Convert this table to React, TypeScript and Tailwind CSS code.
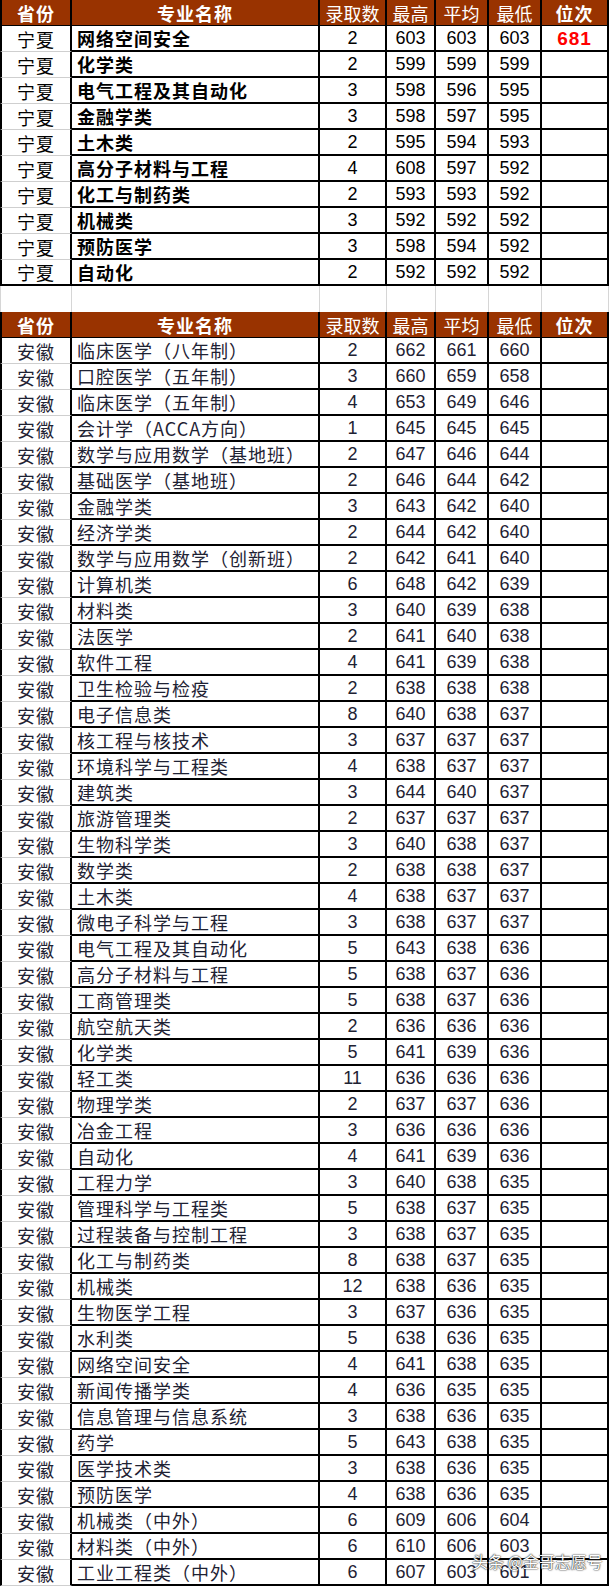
import React from "react";

type Row = [string, number, number, number, number, string?];

const ningxia: Row[] = [
  ["网络空间安全", 2, 603, 603, 603, "681"],
  ["化学类", 2, 599, 599, 599],
  ["电气工程及其自动化", 3, 598, 596, 595],
  ["金融学类", 3, 598, 597, 595],
  ["土木类", 2, 595, 594, 593],
  ["高分子材料与工程", 4, 608, 597, 592],
  ["化工与制药类", 2, 593, 593, 592],
  ["机械类", 3, 592, 592, 592],
  ["预防医学", 3, 598, 594, 592],
  ["自动化", 2, 592, 592, 592],
];

const anhui: Row[] = [
  ["临床医学（八年制）", 2, 662, 661, 660],
  ["口腔医学（五年制）", 3, 660, 659, 658],
  ["临床医学（五年制）", 4, 653, 649, 646],
  ["会计学（ACCA方向）", 1, 645, 645, 645],
  ["数学与应用数学（基地班）", 2, 647, 646, 644],
  ["基础医学（基地班）", 2, 646, 644, 642],
  ["金融学类", 3, 643, 642, 640],
  ["经济学类", 2, 644, 642, 640],
  ["数学与应用数学（创新班）", 2, 642, 641, 640],
  ["计算机类", 6, 648, 642, 639],
  ["材料类", 3, 640, 639, 638],
  ["法医学", 2, 641, 640, 638],
  ["软件工程", 4, 641, 639, 638],
  ["卫生检验与检疫", 2, 638, 638, 638],
  ["电子信息类", 8, 640, 638, 637],
  ["核工程与核技术", 3, 637, 637, 637],
  ["环境科学与工程类", 4, 638, 637, 637],
  ["建筑类", 3, 644, 640, 637],
  ["旅游管理类", 2, 637, 637, 637],
  ["生物科学类", 3, 640, 638, 637],
  ["数学类", 2, 638, 638, 637],
  ["土木类", 4, 638, 637, 637],
  ["微电子科学与工程", 3, 638, 637, 637],
  ["电气工程及其自动化", 5, 643, 638, 636],
  ["高分子材料与工程", 5, 638, 637, 636],
  ["工商管理类", 5, 638, 637, 636],
  ["航空航天类", 2, 636, 636, 636],
  ["化学类", 5, 641, 639, 636],
  ["轻工类", 11, 636, 636, 636],
  ["物理学类", 2, 637, 637, 636],
  ["冶金工程", 3, 636, 636, 636],
  ["自动化", 4, 641, 639, 636],
  ["工程力学", 3, 640, 638, 635],
  ["管理科学与工程类", 5, 638, 637, 635],
  ["过程装备与控制工程", 3, 638, 637, 635],
  ["化工与制药类", 8, 638, 637, 635],
  ["机械类", 12, 638, 636, 635],
  ["生物医学工程", 3, 637, 636, 635],
  ["水利类", 5, 638, 636, 635],
  ["网络空间安全", 4, 641, 638, 635],
  ["新闻传播学类", 4, 636, 635, 635],
  ["信息管理与信息系统", 3, 638, 636, 635],
  ["药学", 5, 643, 638, 635],
  ["医学技术类", 3, 638, 636, 635],
  ["预防医学", 4, 638, 636, 635],
  ["机械类（中外）", 6, 609, 606, 604],
  ["材料类（中外）", 6, 610, 606, 603],
  ["工业工程类（中外）", 6, 607, 603, 601],
];

const grid = "grid h-[26px] grid-cols-[72px_248px_67px_49px_53px_53px_67px]";
const cjk = "font-['Noto_Sans_CJK_SC',sans-serif]";
const num = "font-['Liberation_Sans','Noto_Sans_CJK_SC',sans-serif]";

function Header() {
  const cell = "flex items-center justify-center border-r-2 border-b border-black text-[18px] leading-none text-white";
  return (
    <div className={`${grid} bg-[#993300] ${cjk}`}>
      <div className={`${cell} border-l-2 font-bold tracking-[1px]`}>省份</div>
      <div className={`${cell} font-bold tracking-[1px]`}>专业名称</div>
      <div className={cell}>录取数</div>
      <div className={cell}>最高</div>
      <div className={cell}>平均</div>
      <div className={cell}>最低</div>
      <div className={`${cell} font-bold tracking-[1px]`}>位次</div>
    </div>
  );
}

function DataRow({ prov, row, bold, last, ink }: { prov: string; row: Row; bold: boolean; last: boolean; ink: string }) {
  const [name, count, hi, avg, lo, rank] = row;
  const line = "border-r-2 border-b-2 border-black";
  const numCell = `${line} flex items-center justify-center text-[18px] leading-none ${num} ${ink}`;
  return (
    <div className={`${grid} bg-white`}>
      <div
        className={`flex items-center justify-center border-l-2 border-r-2 border-l-black border-r-black text-[18px] leading-none tracking-[1px] ${cjk} ${ink} ${
          last ? "border-b-2 border-b-black" : "border-b border-b-[#cfcfcf]"
        }`}
      >
        {prov}
      </div>
      <div className={`${line} flex items-center pl-[5px] text-[18px] leading-none tracking-[1px] whitespace-nowrap ${cjk} ${ink} ${bold ? "font-bold" : ""}`}>
        {name}
      </div>
      <div className={numCell}>{count}</div>
      <div className={numCell}>{hi}</div>
      <div className={numCell}>{avg}</div>
      <div className={numCell}>{lo}</div>
      <div className={`${line} flex items-center justify-center font-['Liberation_Sans',sans-serif] text-[19px] font-bold leading-none tracking-[1px] text-[#ff0000]`}>
        {rank ?? ""}
      </div>
    </div>
  );
}

function Gap() {
  const cell = "border-r border-[#d6d6d6]";
  return (
    <div className={`${grid} bg-white`}>
      <div className={`${cell} border-l`} />
      <div className={cell} />
      <div className={cell} />
      <div className={cell} />
      <div className={cell} />
      <div className={cell} />
      <div className={cell} />
    </div>
  );
}

export default function App() {
  return (
    <div className="relative h-[1587px] w-[614px] overflow-hidden bg-white">
      <div className="w-[609px]">
        <Header />
        {ningxia.map((r, i) => (
          <DataRow key={`n${i}`} prov="宁夏" row={r} bold last={i === ningxia.length - 1} ink="text-black" />
        ))}
        <Gap />
        <Header />
        {anhui.map((r, i) => (
          <DataRow key={`a${i}`} prov="安徽" row={r} bold={false} last={false} ink="text-[#1e2233]" />
        ))}
      </div>
      <div className="absolute left-[472px] top-[1553px] font-['Noto_Sans_CJK_SC',sans-serif] text-[16px] leading-none text-white [text-shadow:0_0_2px_#333,0_0_1px_#000]">
        头条 @金哥志愿号
      </div>
    </div>
  );
}
